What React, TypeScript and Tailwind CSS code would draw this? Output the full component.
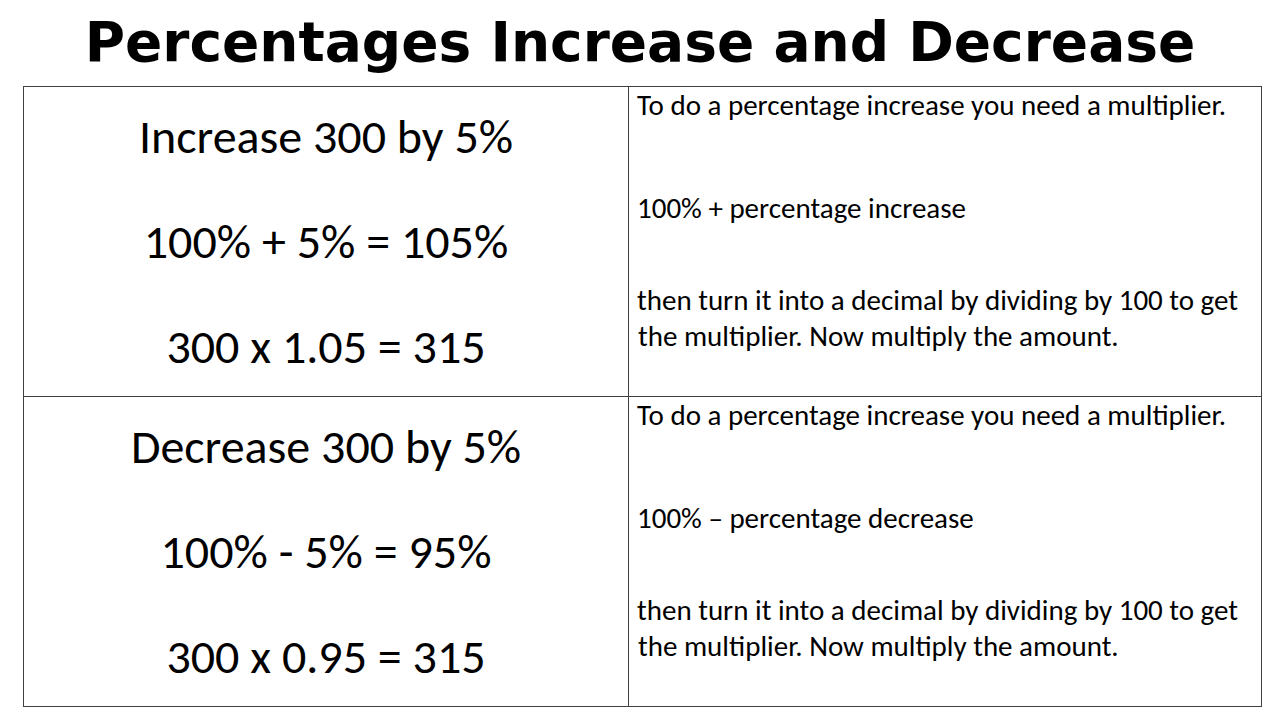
import React from "react";

const body = { fontFamily: "Carlito, Calibri, Lato, sans-serif" };

function LeftCell({ lines }: { lines: string[] }) {
  return (
    <div className="-mt-[3px] flex flex-col items-center text-[48px] leading-[105px] text-black" style={body}>
      {lines.map((l, i) => (
        <div key={i} className="whitespace-pre">{l}</div>
      ))}
    </div>
  );
}

function RightCell({ mid }: { mid: string }) {
  return (
    <div className="pl-[8px] text-[29px] leading-[36px] text-black" style={body}>
      <p className="mt-[0px]">To do a percentage increase you need a multiplier.</p>
      <p className="mt-[67px]">{mid}</p>
      <p className="mt-[56px]">then turn it into a decimal by dividing by 100 to get</p>
      <p className="pl-[1px]">the multiplier. Now multiply the amount.</p>
    </div>
  );
}

export default function App() {
  return (
    <div className="w-[1280px] h-[720px] bg-white overflow-hidden">
      <div
        className="h-[86px] flex items-center justify-center text-[55px] font-bold text-black pb-[1px]"
        style={{ fontFamily: '"Comic Sans MS", "DejaVu Sans", sans-serif' }}
      >
        Percentages Increase and Decrease
      </div>
      <div className="ml-[23px] w-[1239px] h-[621px] border border-[#404040] grid grid-cols-[605px_1fr] grid-rows-[310px_1fr]">
        <div className="border-r border-b border-[#404040] overflow-hidden">
          <LeftCell lines={["Increase 300 by 5%", "100% + 5% = 105%", "300 x 1.05 = 315"]} />
        </div>
        <div className="border-b border-[#404040] overflow-hidden">
          <RightCell mid="100% + percentage increase" />
        </div>
        <div className="border-r border-[#404040] overflow-hidden">
          <LeftCell lines={["Decrease 300 by 5%", "100% - 5% = 95%", "300 x 0.95 = 315"]} />
        </div>
        <div className="overflow-hidden">
          <RightCell mid="100% – percentage decrease" />
        </div>
      </div>
    </div>
  );
}
